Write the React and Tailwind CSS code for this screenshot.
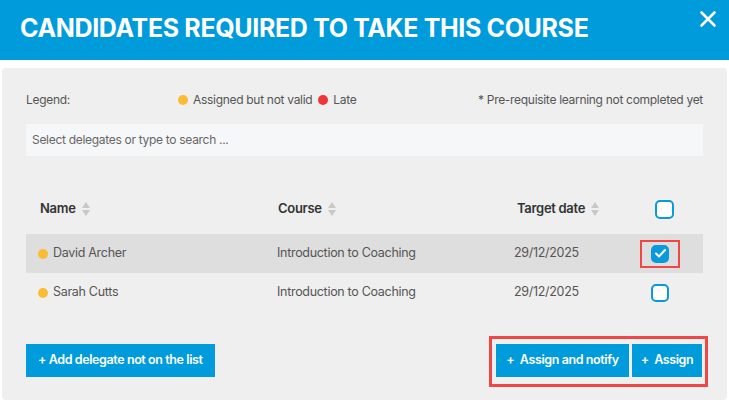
import React, { useState } from 'react';

function SortArrows() {
  return (
    <span className="ml-1.5 inline-flex flex-col gap-[2px]">
      <svg width="8" height="6" viewBox="0 0 8 6"><path d="M4 0 L8 6 L0 6 Z" fill="#c8c8c8" /></svg>
      <svg width="8" height="6" viewBox="0 0 8 6"><path d="M0 0 L8 0 L4 6 Z" fill="#c8c8c8" /></svg>
    </span>
  );
}

function Checkbox({ checked, onChange, big }) {
  return (
    <button
      onClick={onChange}
      className={`${big ? 'w-[19px] h-[19px]' : 'w-[18px] h-[18px]'} rounded-[5px] border-2 border-[#0a9ad9] flex items-center justify-center ${checked ? 'bg-[#0a9ad9]' : 'bg-white'}`}
    >
      {checked && (
        <svg width="11" height="9" viewBox="0 0 11 9">
          <path d="M1 4.5 L4 7.5 L10 1" stroke="white" strokeWidth="2" fill="none" strokeLinecap="round" strokeLinejoin="round" />
        </svg>
      )}
    </button>
  );
}

const rows = [
  { name: 'David Archer', course: 'Introduction to Coaching', date: '29/12/2025' },
  { name: 'Sarah Cutts', course: 'Introduction to Coaching', date: '29/12/2025' },
];

export default function App() {
  const [checked, setChecked] = useState([true, false]);
  const [all, setAll] = useState(false);

  const toggle = (i) => setChecked(checked.map((c, j) => (j === i ? !c : c)));

  return (
    <div className="w-[729px] h-[404px] bg-white text-[#333] overflow-hidden" style={{ fontFamily: 'Inter, "Liberation Sans", sans-serif' }}>
      <div className="h-[60px] bg-[#009bdb] flex items-start justify-between pl-5 pr-3">
        <h1 className="text-white text-[25px] leading-none font-bold tracking-[-0.35px] mt-[16px]">CANDIDATES REQUIRED TO TAKE THIS COURSE</h1>
        <button className="mt-[10px] text-white">
          <svg width="18" height="18" viewBox="0 0 18 18">
            <path d="M2.5 2.5 L15.5 15.5 M15.5 2.5 L2.5 15.5" stroke="white" strokeWidth="2.6" strokeLinecap="round" />
          </svg>
        </button>
      </div>

      <div className="mx-[2px] mt-[8px] h-[332px] bg-[#efefef] rounded-[4px] px-6 pt-[23px]">
        <div className="flex items-center text-[12px] text-[#555] tracking-[-0.3px]">
          <span className="w-[152px]">Legend:</span>
          <span className="w-[10px] h-[10px] rounded-full bg-[#fbbc34] mr-[5px]"></span>
          <span>Assigned but not valid</span>
          <span className="w-[10px] h-[10px] rounded-full bg-[#ef3535] ml-[6px] mr-[5px]"></span>
          <span>Late</span>
          <span className="ml-auto">* Pre-requisite learning not completed yet</span>
        </div>

        <div className="mt-[15px] h-[32px] bg-[#f6f7f9] flex items-center px-[6px] text-[12px] text-[#666] tracking-[-0.3px]">
          Select delegates or type to search ...
        </div>

        <div className="mt-[36px] text-[13px]">
          <div className="flex items-center h-[34px] font-semibold text-[#333] tracking-[-0.3px]">
            <div className="w-[252px] pl-[14px] flex items-center">Name <SortArrows /></div>
            <div className="w-[239px] flex items-center">Course <SortArrows /></div>
            <div className="w-[136px] flex items-center">Target date <SortArrows /></div>
            <div className="w-[22px] flex justify-center"><Checkbox big checked={all} onChange={() => setAll(!all)} /></div>
          </div>
          <div className="mt-[8px]">
            {rows.map((r, i) => (
              <div key={r.name} className={`flex items-center h-[39px] text-[12.5px] text-[#555] tracking-[-0.3px] ${i === 0 ? 'bg-[#dedede]' : ''}`}>
                <div className="w-[251px] pl-[12px] flex items-center">
                  <span className="w-[10px] h-[10px] rounded-full bg-[#fbbc34] mr-[5px]"></span>
                  {r.name}
                </div>
                <div className="w-[237px]">{r.course}</div>
                <div className="w-[126px]">{r.date}</div>
                <div className={`w-[40px] h-[28px] flex items-center justify-center ${i === 0 ? 'border-2 border-[#f04646]' : ''}`}>
                  <Checkbox checked={checked[i]} onChange={() => toggle(i)} />
                </div>
              </div>
            ))}
          </div>
        </div>

        <div className="mt-[24px] flex items-start justify-between">
          <button className="mt-[8px] h-[33px] px-[12px] bg-[#009bdb] text-white text-[12.5px] font-semibold tracking-[-0.4px]">
            + Add delegate not on the list
          </button>
          <div className="-mr-[5px] border-[3px] border-[#f04646] pt-[5px] pb-[7px] pl-[4px] pr-[3px] flex gap-[3px]">
            <button className="h-[33px] w-[133px] bg-[#009bdb] text-white text-[12.5px] font-semibold tracking-[-0.4px]">
              +&nbsp; Assign and notify
            </button>
            <button className="h-[33px] w-[70px] bg-[#009bdb] text-white text-[12.5px] font-semibold tracking-[-0.4px]">
              +&nbsp; Assign
            </button>
          </div>
        </div>
      </div>
    </div>
  );
}
